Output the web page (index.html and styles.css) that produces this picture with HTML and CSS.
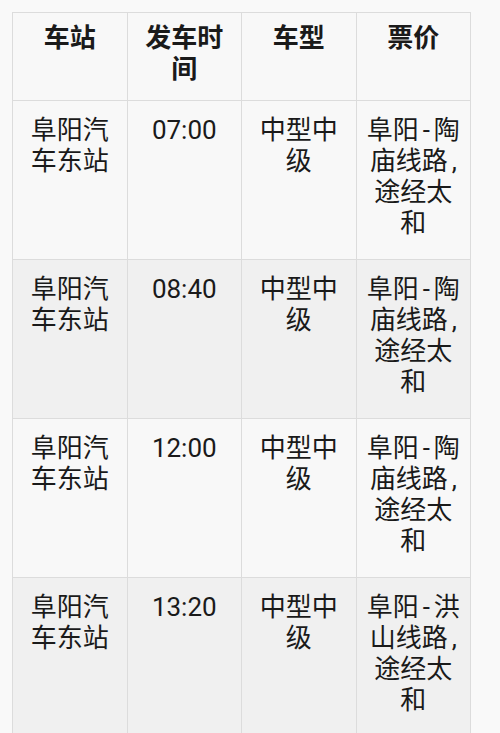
FILE: index.html
```html
<!DOCTYPE html>
<html lang="zh">
<head>
<meta charset="utf-8">
<link rel="stylesheet" href="styles.css">
</head>
<body>
<div class="page">
<table class="schedule">
  <thead>
    <tr><th>车站</th><th>发车时间</th><th>车型</th><th>票价</th></tr>
  </thead>
  <tbody>
    <tr><td>阜阳汽车东站</td><td>07:00</td><td>中型中级</td><td>阜阳<span class="dash">-</span>陶庙线路<span class="comma">,</span>途经太和</td></tr>
    <tr><td>阜阳汽车东站</td><td>08:40</td><td>中型中级</td><td>阜阳<span class="dash">-</span>陶庙线路<span class="comma">,</span>途经太和</td></tr>
    <tr><td>阜阳汽车东站</td><td>12:00</td><td>中型中级</td><td>阜阳<span class="dash">-</span>陶庙线路<span class="comma">,</span>途经太和</td></tr>
    <tr><td>阜阳汽车东站</td><td>13:20</td><td>中型中级</td><td>阜阳<span class="dash">-</span>洪山线路<span class="comma">,</span>途经太和</td></tr>
  </tbody>
</table>
</div>
</body>
</html>
```

FILE: styles.css
```css
html, body {
  margin: 0;
  padding: 0;
  background: #f9f9f9;
}
.page {
  padding: 12px 0 0 12px;
  font-family: Roboto, "Noto Sans CJK SC", sans-serif;
  color: #1a1a1a;
}
.schedule {
  width: 459px;
  table-layout: fixed;
  border-collapse: collapse;
  font-size: 26px;
  line-height: 31px;
}
.schedule th,
.schedule td {
  border: 1px solid #dcdcdc;
  text-align: center;
  vertical-align: top;
  padding: 14px 7px 20px;
  background: #f8f8f8;
}
.schedule th {
  font-weight: bold;
  padding: 10px 7px 15px;
}
.schedule tbody tr:nth-child(even) td {
  background: #f0f0f0;
}
.dash {
  margin: 0 4px;
}
.comma {
  margin-left: 4px;
}
```
